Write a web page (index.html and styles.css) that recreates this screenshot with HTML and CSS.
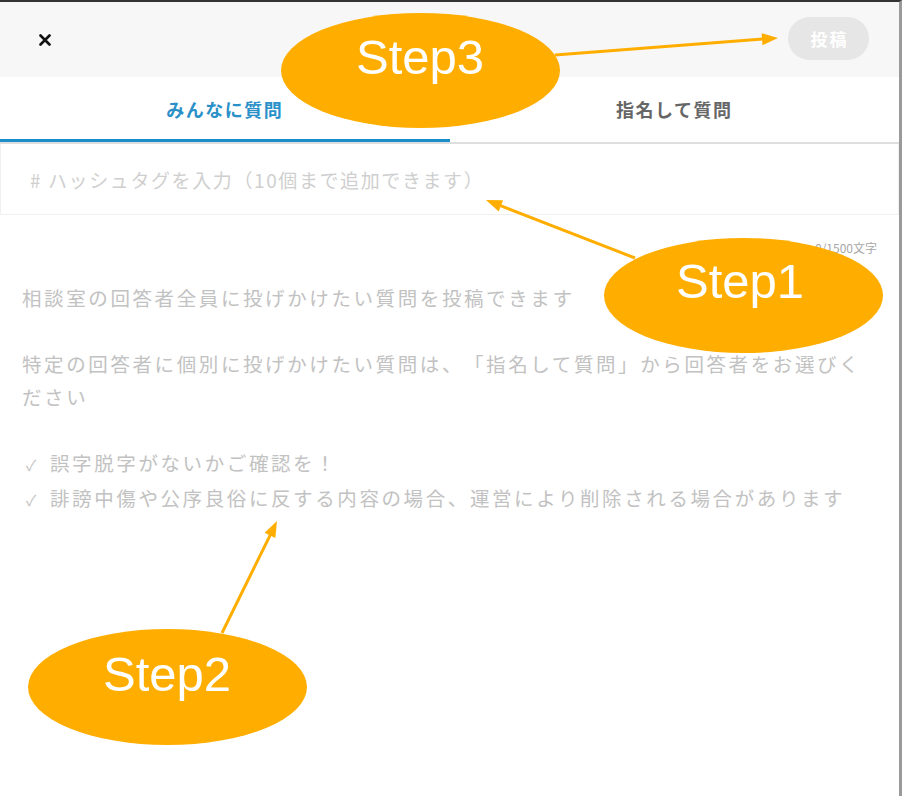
FILE: index.html
```html
<!DOCTYPE html>
<html lang="ja">
<head>
<meta charset="utf-8">
<title>質問を投稿</title>
<link rel="stylesheet" href="styles.css">
</head>
<body>
<div class="page">
  <header class="topbar">
    <button class="close" aria-label="閉じる">
      <svg width="12" height="12" viewBox="0 0 12 12"><path d="M1.5 1.5 L10.5 10.5 M10.5 1.5 L1.5 10.5" stroke="#111" stroke-width="2.6" stroke-linecap="round"/></svg>
    </button>
    <button class="post">投稿</button>
  </header>
  <nav class="tabs">
    <div class="tab active">みんなに質問</div>
    <div class="tab">指名して質問</div>
  </nav>
  <div class="hashtag"><span class="ph"># ハッシュタグを入力（10個まで追加できます）</span></div>
  <div class="counter">0/1500文字</div>
  <div class="body-text">
    <p>相談室の回答者全員に投げかけたい質問を投稿できます</p>
    <p>特定の回答者に個別に投げかけたい質問は、「指名して質問」から回答者をお選びください</p>
    <p class="checks"><span class="ck">✓</span>誤字脱字がないかご確認を！<br><span class="ck">✓</span>誹謗中傷や公序良俗に反する内容の場合、運営により削除される場合があります</p>
  </div>
  <svg class="annotations" width="902" height="796" viewBox="0 0 902 796">
    <g stroke="#ffae00" stroke-width="3" fill="none">
      <line x1="555" y1="55" x2="763" y2="39.1"/>
      <line x1="635" y1="258" x2="500.5" y2="205.6"/>
      <line x1="222" y1="633" x2="270.3" y2="534.8"/>
    </g>
    <g fill="#ffae00">
      <polygon points="778,38 762.5,45.2 761.6,33.2"/>
      <polygon points="486,200 503.1,200.2 498.7,211.4"/>
      <polygon points="277,521 275.3,538 264.6,532.8"/>
      <ellipse cx="420.5" cy="70.5" rx="139.5" ry="57.5"/>
      <ellipse cx="743.5" cy="295.5" rx="139.5" ry="57.5"/>
      <ellipse cx="167.5" cy="687" rx="139.5" ry="58"/>
    </g>
    <g class="step-label" fill="#fff" text-anchor="middle">
      <text x="420" y="74">Step3</text>
      <text x="740" y="298">Step1</text>
      <text x="167" y="691">Step2</text>
    </g>
  </svg>
</div>
</body>
</html>
```
FILE: styles.css
```css
* { box-sizing: border-box; }
html, body { margin: 0; padding: 0; background: #fff; }
body {
  font-family: "Noto Sans CJK JP", "Noto Sans", sans-serif;
  width: 902px;
  height: 796px;
  overflow: hidden;
}
.page {
  position: relative;
  width: 902px;
  height: 796px;
  border-top: 2px solid #333;
  border-right: 3px solid #9a9a9a;
  background: #fff;
}
.topbar {
  height: 75px;
  background: #f7f7f7;
  display: flex;
  align-items: center;
  justify-content: space-between;
  padding: 0 30px 0 39px;
}
.close {
  border: 0;
  background: transparent;
  padding: 0;
  width: 12px;
  height: 12px;
  display: flex;
  margin-top: 1px;
}
.post {
  border: 0;
  width: 81px;
  height: 43px;
  border-radius: 22px;
  background: #e6e6e6;
  color: #fff;
  font-family: inherit;
  font-weight: 700;
  font-size: 17px;
  letter-spacing: 2px;
  padding: 0 0 0 2px;
  margin-top: -3px;
}
.tabs {
  display: flex;
  border-bottom: 2px solid #dedede;
}
.tab {
  flex: 1;
  height: 65px;
  display: flex;
  align-items: center;
  justify-content: center;
  padding-top: 2px;
  font-size: 18px;
  font-weight: 700;
  letter-spacing: 1.5px;
  color: #666;
  border-bottom: 3px solid transparent;
}
.tab.active {
  color: #2a90c8;
  border-bottom-color: #1b8dc8;
}
.hashtag {
  height: 71px;
  border: 1px solid #f0f0f0;
  border-top: 0;
  display: flex;
  align-items: center;
  padding-left: 29px;
}
.ph {
  font-size: 19px;
  letter-spacing: 1.6px;
  color: #cfcfcf;
}
.counter {
  margin-top: 25px;
  height: 16px;
  line-height: 16px;
  text-align: right;
  padding-right: 22px;
  font-size: 12px;
  color: #a8a8a8;
}
.body-text {
  margin-top: 25px;
  padding: 0 30px 0 22px;
  font-size: 19.5px;
  letter-spacing: 2.6px;
  line-height: 33px;
  color: #c2c2c2;
  text-spacing-trim: space-all;
}
.body-text p {
  margin: 0 0 33px;
}
.ck {
  display: inline-block;
  width: 28px;
  padding-left: 4px;
  font-size: 15px;
  letter-spacing: 0;
}
.annotations {
  position: absolute;
  top: -2px;
  left: 0;
  pointer-events: none;
}
.step-label {
  font-family: "Liberation Sans", Arial, sans-serif;
  font-size: 49px;
}
```
